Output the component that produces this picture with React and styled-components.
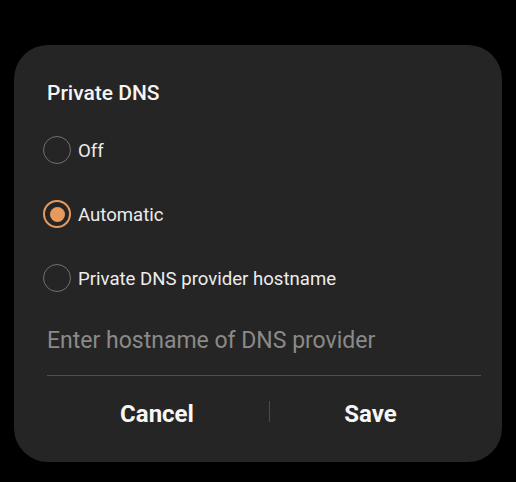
import React from "react";
import styled, { createGlobalStyle } from "styled-components";

const Global = createGlobalStyle`
  html, body { margin: 0; padding: 0; background: #000; }
  body { font-family: Roboto, "Noto Sans", "Liberation Sans", sans-serif; }
  * { box-sizing: border-box; }
`;

const Screen = styled.div`
  width: 516px;
  height: 482px;
  background: #000;
  padding: 45px 14px 0 14px;
`;

const Dialog = styled.div`
  width: 488px;
  height: 417px;
  background: #252525;
  border-radius: 34px;
  padding: 34px 21px 0 33px;
  display: flex;
  flex-direction: column;
`;

const Title = styled.div`
  font-size: 21px;
  line-height: 28px;
  font-weight: 500;
  color: #f4f4f4;
  margin-bottom: 11px;
`;

const Options = styled.div`
  display: flex;
  flex-direction: column;
`;

const Row = styled.div`
  height: 64px;
  display: flex;
  align-items: center;
  gap: 7px;
  margin-left: -4px;
`;

const Radio = styled.span`
  width: 28px;
  height: 28px;
  border-radius: 50%;
  border: ${(p) => (p.$checked ? "2px solid #e8995c" : "1.5px solid #717171")};
  display: flex;
  align-items: center;
  justify-content: center;
  flex: none;
`;

const Dot = styled.span`
  width: 15px;
  height: 15px;
  border-radius: 50%;
  background: #e8995c;
`;

const Label = styled.span`
  font-size: 18.6px;
  line-height: 24px;
  color: #ececec;
  padding-top: 2px;
`;

const Field = styled.div`
  margin-top: 16px;
  padding: 0 0 19px 0;
  border-bottom: 1px solid #4e4e4e;
`;

const Placeholder = styled.div`
  font-size: 23px;
  line-height: 30px;
  color: #8a8a8a;
`;

const Buttons = styled.div`
  display: grid;
  grid-template-columns: 222px 1px 1fr;
  padding-top: 24px;
`;

const Button = styled.div`
  font-size: 24px;
  line-height: 28px;
  font-weight: 700;
  color: #f6f6f6;
  text-align: center;
  padding-right: ${(p) => p.$pr || 0}px;
`;

const Sep = styled.div`
  width: 1px;
  height: 21px;
  background: #4a4a4a;
  margin-top: 1px;
`;

const options = [
  { label: "Off", checked: false },
  { label: "Automatic", checked: true },
  { label: "Private DNS provider hostname", checked: false },
];

export default function App() {
  return (
    <>
      <Global />
      <Screen>
        <Dialog>
          <Title>Private DNS</Title>
          <Options>
            {options.map((o) => (
              <Row key={o.label}>
                <Radio $checked={o.checked}>{o.checked && <Dot />}</Radio>
                <Label>{o.label}</Label>
              </Row>
            ))}
          </Options>
          <Field>
            <Placeholder>Enter hostname of DNS provider</Placeholder>
          </Field>
          <Buttons>
            <Button $pr={2}>Cancel</Button>
            <Sep />
            <Button $pr={10}>Save</Button>
          </Buttons>
        </Dialog>
      </Screen>
    </>
  );
}
